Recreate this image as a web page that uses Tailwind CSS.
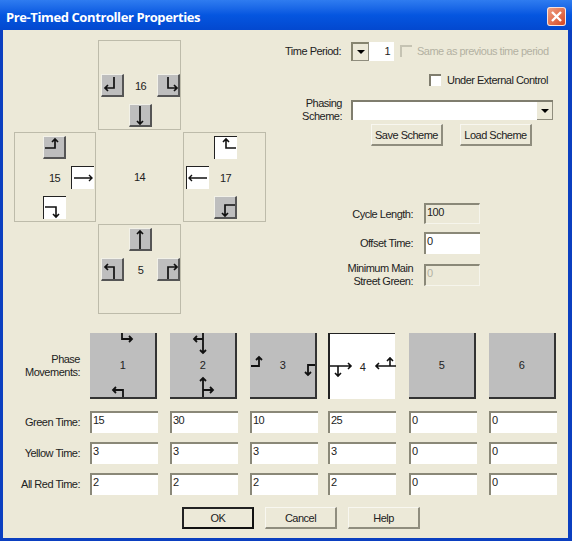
<!DOCTYPE html>
<html lang="en">
<head>
<meta charset="UTF-8">
<title>Pre-Timed Controller Properties</title>
<script src="https://cdn.jsdelivr.net/npm/@tailwindcss/browser@4"></script>
</head>
<body class="bg-[#0b3fc0]">
<div class="w-[572px] h-[541px] flex flex-col overflow-hidden font-['Liberation_Sans',Arial,sans-serif] text-[11px] tracking-[-0.5px] leading-[14px] text-[#222]">

  <!-- Title bar -->
  <div class="h-[30px] shrink-0 flex items-center justify-between pt-[2px] pl-[6px] pr-[6px] bg-gradient-to-b from-[#2f7cf0] via-[#0556e0] to-[#0348cf]">
    <span class="text-white font-bold text-[13px] font-['Open_Sans',sans-serif] tracking-[-0.4px] mt-[1px]">Pre-Timed Controller Properties</span>
    <div class="w-[19px] h-[19px] rounded-[3px] border border-white/80 bg-gradient-to-br from-[#ee9f82] to-[#d4431c] flex items-center justify-center">
      <svg width="13" height="13" viewBox="0 0 13 13"><path d="M2 2L11 11M11 2L2 11" stroke="#fff" stroke-width="2.4"/></svg>
    </div>
  </div>

  <!-- Dialog body -->
  <div class="flex-1 ml-[3px] mr-[4px] mb-[3px] bg-[#ece9d8] flex flex-col">

    <div class="flex h-[295px] shrink-0">
      <!-- Approach cross -->
      <div class="ml-[11px] mt-[10px] w-[252px] h-[274px] grid grid-cols-[82px_83px_83px] grid-rows-[90px_90px_90px] gap-[2px] shrink-0">
        <div></div>
        <div class="border border-[#bdbbaa] pt-[3px] pl-[2px] grid grid-cols-[23px_23px_23px] grid-rows-[23px_23px_23px] gap-x-[5px] gap-y-[7px] items-center justify-items-center">
          <div></div><div></div><div></div>
          <div class="w-[23px] h-[23px] bg-[#bebebe] border-r-2 border-b-2 border-[#555] border-t-[#f2f1e8] border-l-[#f2f1e8] border-t border-l"><svg width="21" height="21" viewBox="0 0 21 21"><path d="M12 2V13H3M6 10L3 13L6 16" fill="none" stroke="#111" stroke-width="1.7"/></svg></div>
          <div>16</div>
          <div class="w-[23px] h-[23px] bg-[#bebebe] border-r-2 border-b-2 border-[#555] border-t-[#f2f1e8] border-l-[#f2f1e8] border-t border-l"><svg width="21" height="21" viewBox="0 0 21 21"><path d="M10 2V13H19M16 10L19 13L16 16" fill="none" stroke="#111" stroke-width="1.7"/></svg></div>
          <div></div>
          <div class="w-[23px] h-[23px] bg-[#bebebe] border-r-2 border-b-2 border-[#555] border-t-[#f2f1e8] border-l-[#f2f1e8] border-t border-l"><svg width="21" height="21" viewBox="0 0 21 21"><path d="M10 1V19M7 16L10 19L13 16" fill="none" stroke="#111" stroke-width="1.7"/></svg></div>
          <div></div>
        </div>
        <div></div>

        <div class="border border-[#bdbbaa] pt-[3px] grid grid-cols-[23px_23px_23px] grid-rows-[23px_23px_23px] gap-x-[5px] gap-y-[7px] items-center justify-items-center">
          <div></div>
          <div class="w-[23px] h-[23px] bg-[#bebebe] border-r-2 border-b-2 border-[#555] border-t-[#f2f1e8] border-l-[#f2f1e8] border-t border-l"><svg width="21" height="21" viewBox="0 0 21 21"><path d="M1 11H11V2M8 5L11 2L14 5" fill="none" stroke="#111" stroke-width="1.7"/></svg></div>
          <div></div>
          <div></div>
          <div>15</div>
          <div class="w-[23px] h-[23px] bg-white border-l border-t border-[#222]"><svg width="22" height="22" viewBox="0 0 22 22"><path d="M2 11H20M17 8L20 11L17 14" fill="none" stroke="#111" stroke-width="1.4"/></svg></div>
          <div></div>
          <div class="w-[23px] h-[23px] bg-white border-l border-t border-[#222]"><svg width="22" height="22" viewBox="0 0 22 22"><path d="M1 10H12V20M9 17L12 20L15 17" fill="none" stroke="#111" stroke-width="1.6"/></svg></div>
          <div></div>
        </div>

        <div class="flex items-center justify-center">14</div>

        <div class="border border-[#bdbbaa] pt-[3px] pl-[2px] grid grid-cols-[23px_23px_23px] grid-rows-[23px_23px_23px] gap-x-[5px] gap-y-[7px] items-center justify-items-center">
          <div></div>
          <div class="w-[23px] h-[23px] bg-white border-l border-t border-[#222]"><svg width="22" height="22" viewBox="0 0 22 22"><path d="M21 11H11V2M8 5L11 2L14 5" fill="none" stroke="#111" stroke-width="1.6"/></svg></div>
          <div></div>
          <div class="w-[23px] h-[23px] bg-white border-l border-t border-[#222]"><svg width="22" height="22" viewBox="0 0 22 22"><path d="M20 11H2M5 8L2 11L5 14" fill="none" stroke="#111" stroke-width="1.4"/></svg></div>
          <div>17</div>
          <div></div>
          <div></div>
          <div class="w-[23px] h-[23px] bg-[#bebebe] border-r-2 border-b-2 border-[#555] border-t-[#f2f1e8] border-l-[#f2f1e8] border-t border-l"><svg width="21" height="21" viewBox="0 0 21 21"><path d="M20 8H10V19M7 16L10 19L13 16" fill="none" stroke="#111" stroke-width="1.7"/></svg></div>
          <div></div>
        </div>

        <div></div>
        <div class="border border-[#bdbbaa] pt-[3px] pl-[2px] grid grid-cols-[23px_23px_23px] grid-rows-[23px_23px_23px] gap-x-[5px] gap-y-[7px] items-center justify-items-center">
          <div></div>
          <div class="w-[23px] h-[23px] bg-[#bebebe] border-r-2 border-b-2 border-[#555] border-t-[#f2f1e8] border-l-[#f2f1e8] border-t border-l"><svg width="21" height="21" viewBox="0 0 21 21"><path d="M10 20V2M7 5L10 2L13 5" fill="none" stroke="#111" stroke-width="1.7"/></svg></div>
          <div></div>
          <div class="w-[23px] h-[23px] bg-[#bebebe] border-r-2 border-b-2 border-[#555] border-t-[#f2f1e8] border-l-[#f2f1e8] border-t border-l"><svg width="21" height="21" viewBox="0 0 21 21"><path d="M12 20V8H3M6 5L3 8L6 11" fill="none" stroke="#111" stroke-width="1.7"/></svg></div>
          <div>5</div>
          <div class="w-[23px] h-[23px] bg-[#bebebe] border-r-2 border-b-2 border-[#555] border-t-[#f2f1e8] border-l-[#f2f1e8] border-t border-l"><svg width="21" height="21" viewBox="0 0 21 21"><path d="M10 20V8H19M16 5L19 8L16 11" fill="none" stroke="#111" stroke-width="1.7"/></svg></div>
          <div></div>
          <div></div>
          <div></div>
        </div>
        <div></div>
      </div>

      <!-- Right settings column -->
      <div class="flex-1 flex flex-col ml-[4px]">
        <div class="flex items-center mt-[11px] h-[20px]">
          <div class="w-[71px] text-right">Time Period:</div>
          <div class="ml-[10px] w-[18px] h-[19px] bg-[#ece9d8] border-t-2 border-l-2 border-[#86846f] border-r border-b border-r-[#8f8d7e] border-b-[#8f8d7e] flex items-center justify-center"><div class="w-0 h-0 border-x-[4px] border-x-transparent border-t-[4px] border-t-black"></div></div>
          <div class="w-[25px] h-[19px] bg-white text-right pr-[4px] leading-[19px]">1</div>
          <div class="ml-[6px] w-[12px] h-[12px] border-t-2 border-l-2 border-[#c5c3b3] bg-[#ece9d8]"></div>
          <div class="ml-[5px] text-[#b3b1a2] whitespace-nowrap">Same as previous time period</div>
        </div>
        <div class="flex items-center mt-[9px] h-[20px]">
          <div class="ml-[159px] w-[12px] h-[12px] bg-white border-t-2 border-l-2 border-[#7f7d6e]"></div>
          <div class="ml-[6px] whitespace-nowrap">Under External Control</div>
        </div>
        <div class="flex mt-[10px] h-[20px]">
          <div class="w-[72px] text-right leading-[13px] -mt-[3px]">Phasing<br>Scheme:</div>
          <div class="ml-[9px] w-[202px] h-[20px] bg-white border-t-2 border-l-2 border-[#7f7d6e] flex justify-end items-stretch">
            <div class="w-[16px] bg-[#ece9d8] border-r border-b border-[#8f8d7e] flex items-center justify-center"><div class="w-0 h-0 border-x-[4px] border-x-transparent border-t-[4px] border-t-black"></div></div>
          </div>
        </div>
        <div class="flex mt-[4px] ml-[101px] gap-[17px]">
          <div class="w-[72px] h-[22px] flex items-center justify-center bg-[#ece9d8] border-t border-l border-[#f8f7f0] border-r-2 border-b-2 border-r-[#8f8d7e] border-b-[#8f8d7e] whitespace-nowrap">Save Scheme</div>
          <div class="w-[72px] h-[22px] flex items-center justify-center bg-[#ece9d8] border-t border-l border-[#f8f7f0] border-r-2 border-b-2 border-r-[#8f8d7e] border-b-[#8f8d7e] whitespace-nowrap">Load Scheme</div>
        </div>
        <div class="flex items-center mt-[57px]">
          <div class="w-[143px] text-right">Cycle Length:</div>
          <div class="ml-[11px] w-[56px] h-[21px] border-t-2 border-l-2 border-[#8a8878] border-r border-b border-r-[#f6f5ec] border-b-[#f6f5ec] pl-[1px] leading-[15px]">100</div>
        </div>
        <div class="flex items-center mt-[8px]">
          <div class="w-[143px] text-right">Offset Time:</div>
          <div class="ml-[11px] w-[56px] h-[22px] bg-white border-t-2 border-l-2 border-[#8a8878] pl-[1px] leading-[15px]">0</div>
        </div>
        <div class="flex items-center mt-[8px]">
          <div class="w-[143px] text-right leading-[13px]">Minimum Main<br>Street Green:</div>
          <div class="ml-[11px] w-[56px] h-[22px] border-t-2 border-l-2 border-[#8a8878] border-r border-b border-r-[#f6f5ec] border-b-[#f6f5ec] pl-[1px] leading-[15px] text-[#b3b1a2]">0</div>
        </div>
      </div>
    </div>

    <!-- Phase grid -->
    <div class="mt-[8px] grid grid-cols-[77px_67px_67px_67px_67px_67px_67px] gap-y-[9px] items-center">
      <div class="text-right leading-[13px] w-[77px] mb-[3px]">Phase<br>Movements:</div>
      <div class="flex gap-[13px] col-span-6 ml-[10px] w-[480px] mb-[3px]">
        <div class="relative w-[67px] h-[66px] shrink-0 bg-[#bebebe] border-r-2 border-b-2 border-[#333] flex items-center justify-center">
          <svg class="absolute inset-0" width="65" height="64" viewBox="0 0 65 64"><path d="M32 0V6H42M39 3L42 6L39 9M33 64V57H23M26 54L23 57L26 60" fill="none" stroke="#111" stroke-width="1.8"/></svg>1</div>
        <div class="relative w-[67px] h-[66px] shrink-0 bg-[#bebebe] border-r-2 border-b-2 border-[#333] flex items-center justify-center">
          <svg class="absolute inset-0" width="65" height="64" viewBox="0 0 65 64"><path d="M33 0V20M30 17L33 20L36 17M33 6H24M27 3L24 6L27 9M33 64V45M30 48L33 45L36 48M33 57H43M40 54L43 57L40 60" fill="none" stroke="#111" stroke-width="1.8"/></svg>2</div>
        <div class="relative w-[67px] h-[66px] shrink-0 bg-[#bebebe] border-r-2 border-b-2 border-[#333] flex items-center justify-center">
          <svg class="absolute inset-0" width="65" height="64" viewBox="0 0 65 64"><path d="M1 33H9V24M6 27L9 24L12 27M65 32H58V42M55 39L58 42L61 39" fill="none" stroke="#111" stroke-width="1.8"/></svg>3</div>
        <div class="relative w-[67px] h-[66px] shrink-0 -ml-[2px] bg-white border-l-2 border-t border-[#222] flex items-center justify-center">
          <svg class="absolute inset-0" width="66" height="65" viewBox="0 0 66 65"><path d="M0 32H21M18 29L21 32L18 35M8 32V42M5 39L8 42L11 39M66 32H46M49 29L46 32L49 35M60 32V24M57 27L60 24L63 27" fill="none" stroke="#111" stroke-width="1.6"/></svg>4</div>
        <div class="w-[67px] h-[66px] shrink-0 ml-[1px] bg-[#bebebe] border-r-2 border-b-2 border-[#333] flex items-center justify-center">5</div>
        <div class="w-[67px] h-[66px] shrink-0 bg-[#bebebe] border-r-2 border-b-2 border-[#333] flex items-center justify-center">6</div>
      </div>

      <div class="text-right w-[77px]">Green Time:</div>
      <div class="flex gap-[12px] col-span-6 ml-[10px] w-[480px]">
        <div class="w-[68px] h-[22px] shrink-0 bg-white border-t-2 border-l-2 border-[#8a8878] pl-[1px] leading-[15px]">15</div>
        <div class="w-[68px] h-[22px] shrink-0 bg-white border-t-2 border-l-2 border-[#8a8878] pl-[1px] leading-[15px]">30</div>
        <div class="w-[68px] h-[22px] shrink-0 bg-white border-t-2 border-l-2 border-[#8a8878] pl-[1px] leading-[15px]">10</div>
        <div class="w-[68px] h-[22px] shrink-0 -ml-[2px] bg-white border-t-2 border-l-2 border-[#8a8878] pl-[1px] leading-[15px]">25</div>
        <div class="w-[68px] h-[22px] shrink-0 ml-[1px] bg-white border-t-2 border-l-2 border-[#8a8878] pl-[1px] leading-[15px]">0</div>
        <div class="w-[68px] h-[22px] shrink-0 bg-white border-t-2 border-l-2 border-[#8a8878] pl-[1px] leading-[15px]">0</div>
      </div>

      <div class="text-right w-[77px]">Yellow Time:</div>
      <div class="flex gap-[12px] col-span-6 ml-[10px] w-[480px]">
        <div class="w-[68px] h-[22px] shrink-0 bg-white border-t-2 border-l-2 border-[#8a8878] pl-[1px] leading-[15px]">3</div>
        <div class="w-[68px] h-[22px] shrink-0 bg-white border-t-2 border-l-2 border-[#8a8878] pl-[1px] leading-[15px]">3</div>
        <div class="w-[68px] h-[22px] shrink-0 bg-white border-t-2 border-l-2 border-[#8a8878] pl-[1px] leading-[15px]">3</div>
        <div class="w-[68px] h-[22px] shrink-0 -ml-[2px] bg-white border-t-2 border-l-2 border-[#8a8878] pl-[1px] leading-[15px]">3</div>
        <div class="w-[68px] h-[22px] shrink-0 ml-[1px] bg-white border-t-2 border-l-2 border-[#8a8878] pl-[1px] leading-[15px]">0</div>
        <div class="w-[68px] h-[22px] shrink-0 bg-white border-t-2 border-l-2 border-[#8a8878] pl-[1px] leading-[15px]">0</div>
      </div>

      <div class="text-right w-[77px]">All Red Time:</div>
      <div class="flex gap-[12px] col-span-6 ml-[10px] w-[480px]">
        <div class="w-[68px] h-[22px] shrink-0 bg-white border-t-2 border-l-2 border-[#8a8878] pl-[1px] leading-[15px]">2</div>
        <div class="w-[68px] h-[22px] shrink-0 bg-white border-t-2 border-l-2 border-[#8a8878] pl-[1px] leading-[15px]">2</div>
        <div class="w-[68px] h-[22px] shrink-0 bg-white border-t-2 border-l-2 border-[#8a8878] pl-[1px] leading-[15px]">2</div>
        <div class="w-[68px] h-[22px] shrink-0 -ml-[2px] bg-white border-t-2 border-l-2 border-[#8a8878] pl-[1px] leading-[15px]">2</div>
        <div class="w-[68px] h-[22px] shrink-0 ml-[1px] bg-white border-t-2 border-l-2 border-[#8a8878] pl-[1px] leading-[15px]">0</div>
        <div class="w-[68px] h-[22px] shrink-0 bg-white border-t-2 border-l-2 border-[#8a8878] pl-[1px] leading-[15px]">0</div>
      </div>
    </div>

    <!-- Dialog buttons -->
    <div class="flex ml-[179px] mt-[12px] gap-[11px]">
      <div class="w-[72px] h-[22px] flex items-center justify-center border-2 border-[#222] border-r-[#111] border-b-[#111] bg-[#ece9d8]">OK</div>
      <div class="w-[72px] h-[22px] flex items-center justify-center bg-[#ece9d8] border-t border-l border-[#f8f7f0] border-r-2 border-b-2 border-r-[#8f8d7e] border-b-[#8f8d7e]">Cancel</div>
      <div class="w-[72px] h-[22px] flex items-center justify-center bg-[#ece9d8] border-t border-l border-[#f8f7f0] border-r-2 border-b-2 border-r-[#8f8d7e] border-b-[#8f8d7e]">Help</div>
    </div>
  </div>
</div>
</body>
</html>
